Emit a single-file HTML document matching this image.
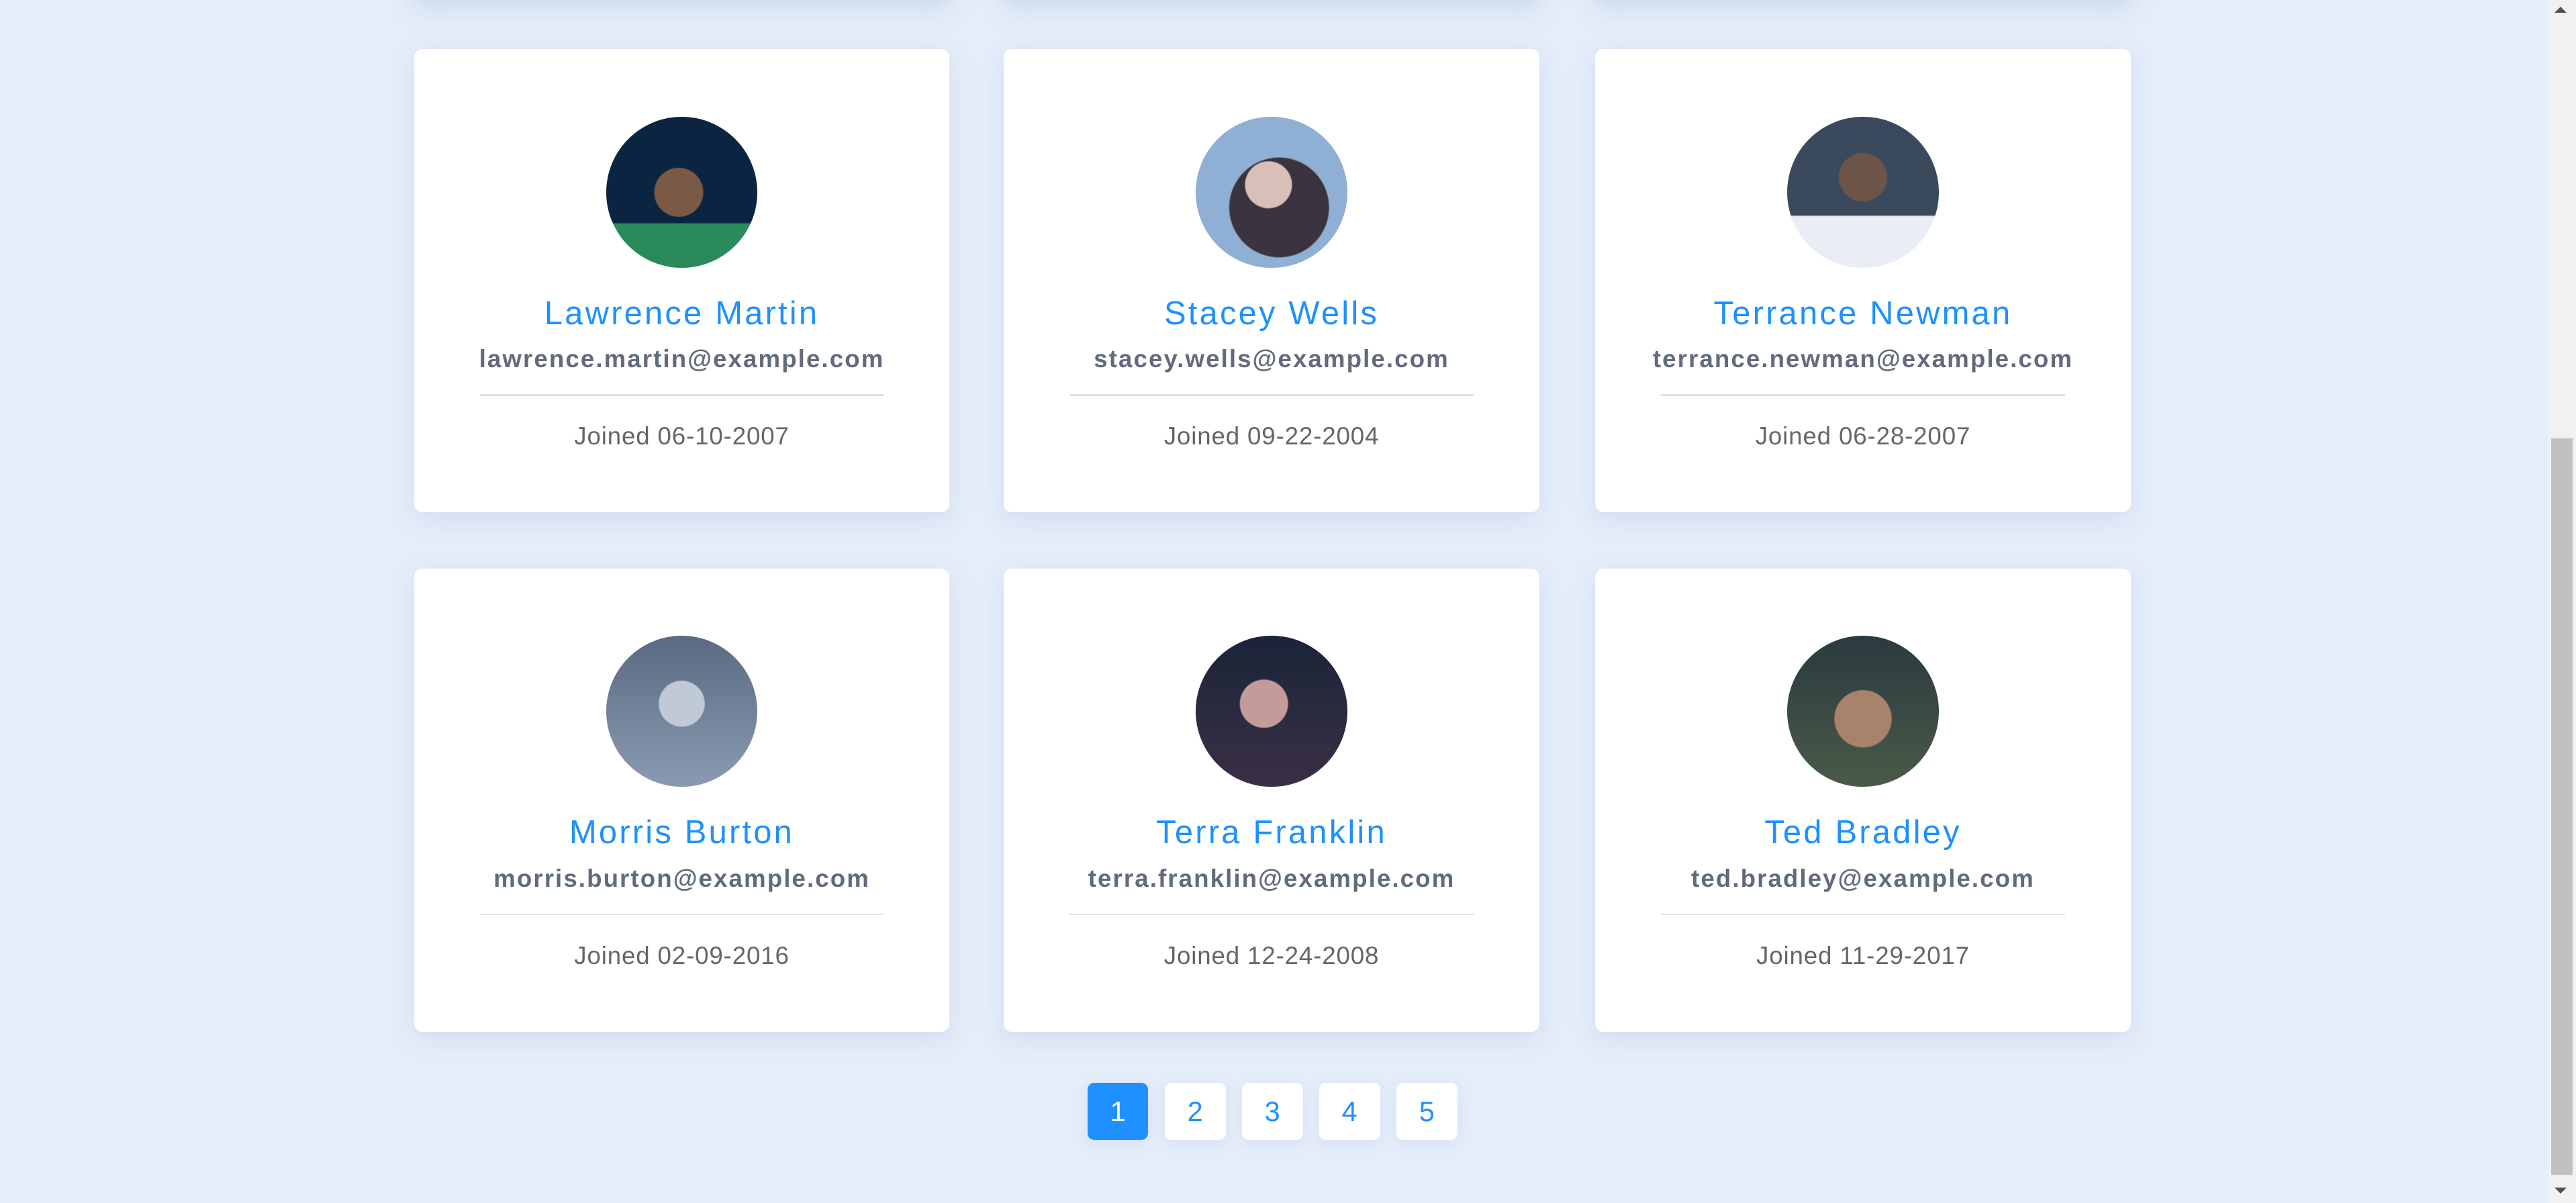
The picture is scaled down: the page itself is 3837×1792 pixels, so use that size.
<!DOCTYPE html>
<html><head><meta charset="utf-8"><style>
html,body{margin:0;padding:0;overflow:hidden}
body{width:3837px;height:1792px;background:#e5edf9}
#w{zoom:2.44707;width:1568px;height:732.3px;position:relative;font-family:"Liberation Sans",sans-serif}
.card{position:absolute;width:326px;height:282px;background:#fff;border-radius:5px;box-shadow:0 4px 14px rgba(120,150,200,.18);text-align:center}
.av{position:absolute;left:117px;top:41px;width:92px;height:92px;border-radius:50%;overflow:hidden}
.nm{position:absolute;left:0;right:0;top:148px;font-size:20px;color:#1e90ff;line-height:26px;letter-spacing:1.3px}
.em{position:absolute;left:0;right:0;top:179px;font-size:15px;font-weight:bold;color:#606b7d;line-height:20px;letter-spacing:.85px}
.hr{position:absolute;left:40px;right:40px;top:210px;height:1px;background:#e2e2e2}
.jd{position:absolute;left:0;right:0;top:226px;font-size:15px;color:#666;line-height:20px;letter-spacing:.35px}
.pg{position:absolute;top:659px;width:37px;height:35px;border-radius:4px;background:#fff;color:#1e90ff;font-size:17px;line-height:35px;text-align:center;box-shadow:0 2px 8px rgba(120,150,200,.15)}
.top{position:absolute;top:-20px;width:326px;height:20px;box-shadow:0 4px 14px rgba(120,150,200,.25);background:#fff}
</style></head><body><div id="w">
<div class="top" style="left:252px"></div><div class="top" style="left:611px"></div><div class="top" style="left:971px"></div>

<div class="card" style="left:252px;top:30px"><div class="av" style="background:radial-gradient(circle at 48% 50%,#7a5a44 0 22%,transparent 23%),linear-gradient(#0b2442 70%,#2a8a5a 71%)"></div><div class="nm">Lawrence Martin</div><div class="em">lawrence.martin@example.com</div><div class="hr"></div><div class="jd">Joined 06-10-2007</div></div>
<div class="card" style="left:611px;top:30px"><div class="av" style="background:radial-gradient(circle at 48% 45%,#d8c0b8 0 20%,transparent 21%),radial-gradient(circle at 55% 60%,#3b3440 0 40%,transparent 41%),#8fb0d4"></div><div class="nm">Stacey Wells</div><div class="em">stacey.wells@example.com</div><div class="hr"></div><div class="jd">Joined 09-22-2004</div></div>
<div class="card" style="left:971px;top:30px"><div class="av" style="background:radial-gradient(circle at 50% 40%,#6d5448 0 20%,transparent 21%),linear-gradient(#3a4a5c 65%,#e8eef4 66%)"></div><div class="nm">Terrance Newman</div><div class="em">terrance.newman@example.com</div><div class="hr"></div><div class="jd">Joined 06-28-2007</div></div>

<div class="card" style="left:252px;top:346px"><div class="av" style="background:radial-gradient(circle at 50% 45%,#c0cad6 0 20%,transparent 21%),linear-gradient(#5a6a80,#8a9ab0)"></div><div class="nm">Morris Burton</div><div class="em">morris.burton@example.com</div><div class="hr"></div><div class="jd">Joined 02-09-2016</div></div>
<div class="card" style="left:611px;top:346px"><div class="av" style="background:radial-gradient(circle at 45% 45%,#c59a9a 0 20%,transparent 21%),linear-gradient(#1a2438,#3a3045)"></div><div class="nm">Terra Franklin</div><div class="em">terra.franklin@example.com</div><div class="hr"></div><div class="jd">Joined 12-24-2008</div></div>
<div class="card" style="left:971px;top:346px"><div class="av" style="background:radial-gradient(circle at 50% 55%,#a8826a 0 25%,transparent 26%),linear-gradient(#2a3a40,#4a5a48)"></div><div class="nm">Ted Bradley</div><div class="em">ted.bradley@example.com</div><div class="hr"></div><div class="jd">Joined 11-29-2017</div></div>

<div class="pg" style="left:662px;background:#1e90ff;color:#fff">1</div>
<div class="pg" style="left:709px">2</div>
<div class="pg" style="left:756px">3</div>
<div class="pg" style="left:803px">4</div>
<div class="pg" style="left:850px">5</div>

<div style="position:absolute;left:1551px;top:0;width:17px;height:733px;background:#f1f1f1"></div>
<div style="position:absolute;left:1553px;top:267px;width:13px;height:448px;background:#c1c1c1"></div>
<div style="position:absolute;left:1555px;top:4px;width:0;height:0;border-left:4px solid transparent;border-right:4px solid transparent;border-bottom:4px solid #505050"></div>
<div style="position:absolute;left:1555px;top:723px;width:0;height:0;border-left:4px solid transparent;border-right:4px solid transparent;border-top:4px solid #505050"></div>
</div></body></html>
